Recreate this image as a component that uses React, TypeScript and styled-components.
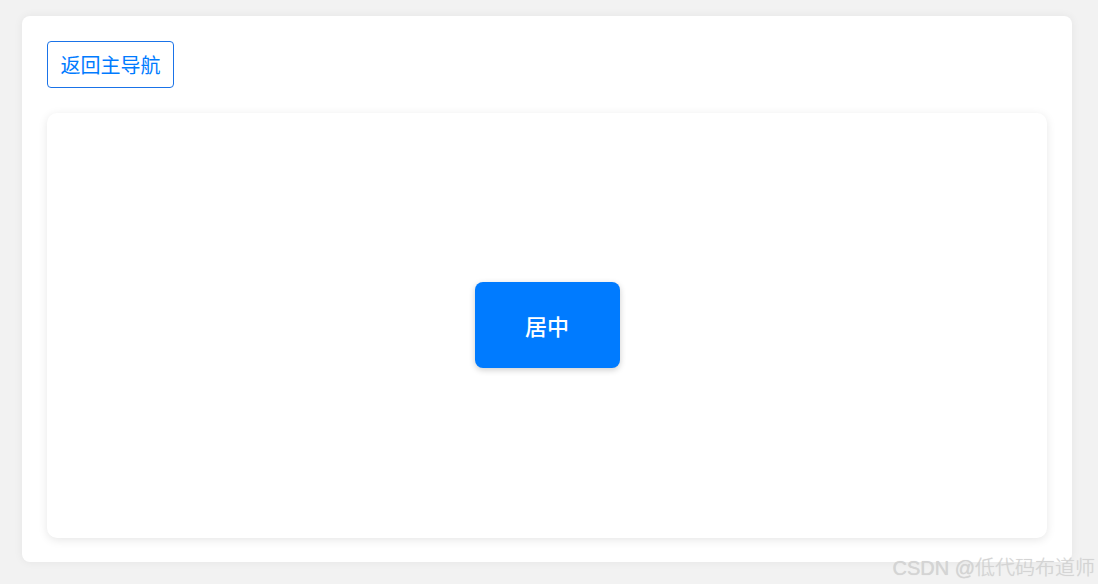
import { createGlobalStyle, styled } from 'styled-components';

const GlobalStyle = createGlobalStyle`
    html, body {
        margin: 0;
        padding: 0;
        background-color: #f2f2f2;
        font-family: "Noto Sans CJK SC", "Noto Sans", sans-serif;
    }
`;

export default function App() {
    return (
        <>
            <GlobalStyle />
            <Page>
                <Card>
                    <BackButton>返回主导航</BackButton>
                    <Stage>
                        <CenterBox>居中</CenterBox>
                    </Stage>
                </Card>
                <Watermark>CSDN @低代码布道师</Watermark>
            </Page>
        </>
    );
}

const Page = styled.div`
    position: relative;
    width: 1098px;
    height: 584px;
    padding: 16px 26px 22px 22px;
    box-sizing: border-box;
`;

const Card = styled.div`
    display: flex;
    flex-direction: column;
    align-items: flex-start;
    gap: 25px;
    height: 100%;
    box-sizing: border-box;
    padding: 25px 25px 24px;
    background-color: #fff;
    border-radius: 8px;
    box-shadow: 0 0 10px rgba(0, 0, 0, 0.06);
`;

const BackButton = styled.button`
    width: 127px;
    height: 47px;
    padding: 0;
    border: 1px solid #1a73e8;
    border-radius: 4px;
    background-color: #fff;
    color: #007bff;
    font-family: inherit;
    font-size: 20px;
    cursor: pointer;
`;

const Stage = styled.div`
    flex: 1;
    align-self: stretch;
    display: flex;
    align-items: center;
    justify-content: center;
    background-color: #fff;
    border-radius: 10px;
    box-shadow: 0 2px 10px rgba(0, 0, 0, 0.1);
`;

const CenterBox = styled.div`
    width: 145px;
    height: 86px;
    margin-top: -1px;
    display: flex;
    align-items: center;
    justify-content: center;
    background-color: #007bff;
    color: #fff;
    border-radius: 8px;
    font-size: 22px;
    font-weight: 500;
    box-shadow: 0 2px 6px rgba(0, 0, 0, 0.2);
`;

const Watermark = styled.div`
    position: absolute;
    right: 3px;
    bottom: 3px;
    color: #d4d4d4;
    font-family: "Liberation Sans", "Noto Sans CJK SC", sans-serif;
    font-size: 20px;
    font-weight: 300;
    text-shadow: 0 0 1px rgba(0, 0, 0, 0.12);
`;
